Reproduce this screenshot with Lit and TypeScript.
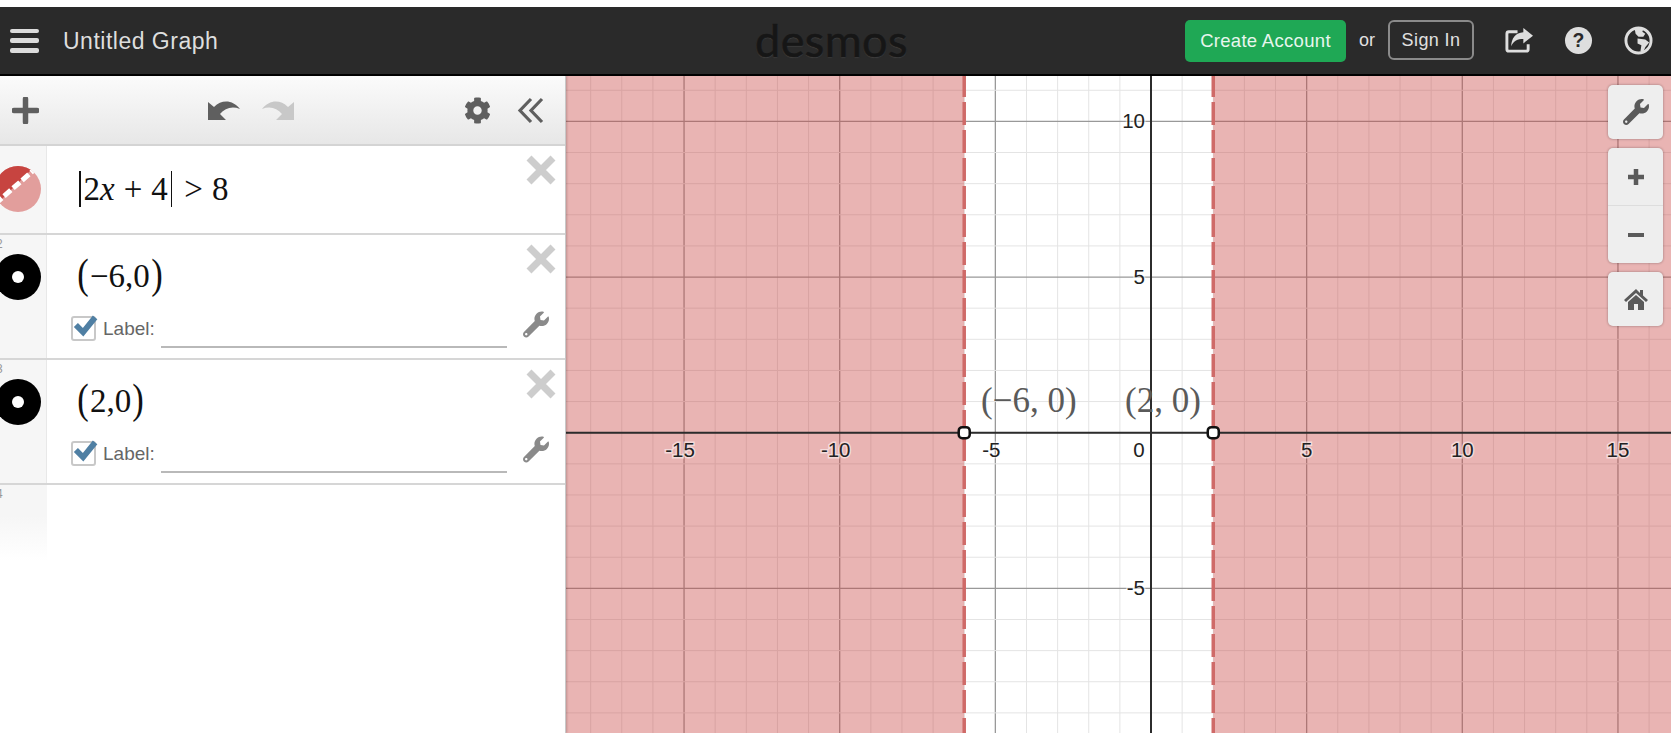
import { LitElement, html, css, svg } from "lit";
import { customElement } from "lit/decorators.js";

const GRAPH_W = 1105, GRAPH_H = 657;
const OX = 585, OY = 356.7, U = 31.13;
const X = (v: number) => OX + v * U;
const Y = (v: number) => OY - v * U;
const range = (a: number, b: number) => Array.from({ length: b - a + 1 }, (_, i) => a + i);

const WRENCH = "M507.73 109.1c-2.24-9.03-13.54-12.09-20.12-5.51l-74.36 74.36-67.88-11.31-11.31-67.88 74.36-74.36c6.62-6.62 3.43-17.9-5.66-20.16-47.38-11.74-99.55.91-136.58 37.93-39.64 39.64-50.55 97.1-34.05 147.2L18.74 402.76c-24.99 24.99-24.99 65.51 0 90.5 24.99 24.99 65.51 24.99 90.5 0l213.21-213.21c50.12 16.71 107.47 5.68 147.37-34.22 37.07-37.07 49.7-89.32 37.91-136.73zM64 472c-13.25 0-24-10.75-24-24 0-13.26 10.75-24 24-24s24 10.74 24 24c0 13.25-10.75 24-24 24z";
const GEAR = "M487.4 315.7l-42.6-24.6c4.3-23.2 4.3-47 0-70.2l42.6-24.6c4.9-2.8 7.1-8.6 5.5-14-11.1-35.6-30-67.8-54.7-94.6-3.8-4.1-10-5.1-14.8-2.3L380.8 110c-17.9-15.4-38.5-27.3-60.8-35.1V25.8c0-5.6-3.9-10.5-9.4-11.7-36.7-8.2-74.3-7.8-109.2 0-5.5 1.2-9.4 6.1-9.4 11.7V75c-22.2 7.9-42.8 19.8-60.8 35.1L88.7 85.5c-4.9-2.8-11-1.9-14.8 2.3-24.7 26.7-43.6 58.9-54.7 94.6-1.7 5.4.6 11.2 5.5 14L67.3 221c-4.3 23.2-4.3 47 0 70.2l-42.6 24.6c-4.9 2.8-7.1 8.6-5.5 14 11.1 35.6 30 67.8 54.7 94.6 3.8 4.1 10 5.1 14.8 2.3l42.6-24.6c17.9 15.4 38.5 27.3 60.8 35.1v49.2c0 5.6 3.9 10.5 9.4 11.7 36.7 8.2 74.3 7.8 109.2 0 5.5-1.2 9.4-6.1 9.4-11.7v-49.2c22.2-7.9 42.8-19.8 60.8-35.1l42.6 24.6c4.9 2.8 11 1.9 14.8-2.3 24.7-26.7 43.6-58.9 54.7-94.6 1.5-5.5-.7-11.3-5.6-14.1zM256 336c-44.1 0-80-35.9-80-80s35.9-80 80-80 80 35.9 80 80-35.9 80-80 80z";

const wrench = (cls: string) => html`<svg class=${cls} viewBox="0 0 512 512"><path fill="currentColor" d=${WRENCH}></path></svg>`;
const closeX = html`<svg class="x" viewBox="0 0 30 30"><path d="M3 3 27 27M27 3 3 27" stroke="#cdcdcd" stroke-width="7" fill="none"></path></svg>`;
const check = html`<span class="cb"><svg viewBox="0 0 26 26"><path d="M3 11 10.5 18.5 23 3" stroke="#4f7fa3" stroke-width="6" fill="none"></path></svg></span>`;
const dot = html`<svg class="ico" viewBox="0 0 46 46"><circle cx="23" cy="23" r="23" fill="#000"></circle><circle cx="23" cy="23" r="6" fill="#fff"></circle></svg>`;
const ineq = html`<svg class="ico" viewBox="0 0 46 46"><defs><clipPath id="c"><circle cx="23" cy="23" r="23"></circle></clipPath></defs><g clip-path="url(#c)"><rect width="46" height="46" fill="#e29e9c"></rect><path d="M0 0H46L0 46Z" transform="translate(-4 -2)" fill="#c74440"></path><path d="M0 38 40 3" stroke="#fff" stroke-width="5" stroke-dasharray="9 3" fill="none"></path></g></svg>`;

@customElement("app-root")
export class AppRoot extends LitElement {
  static styles = css`
    :host { display: flex; flex-direction: column; height: 733px; width: 1671px; overflow: hidden; background: #fff; font-family: "Liberation Sans", Arial, sans-serif; padding-top: 7px; box-sizing: border-box; }
    header { height: 69px; flex: none; box-sizing: border-box; background: #2a2a2a; border-bottom: 2px solid #000; display: grid; grid-template-columns: 1fr auto 1fr; align-items: center; color: #e0e0e0; }
    .hleft { display: flex; align-items: center; }
    .burger { width: 29px; height: 24px; margin-left: 10px; display: flex; flex-direction: column; justify-content: space-between; }
    .burger i { display: block; height: 4.5px; border-radius: 2px; background: #dcdcdc; }
    .title { margin: 1px 0 0 24px; font-size: 23px; letter-spacing: .5px; color: #dedede; }
    .logo { font-family: Lato, sans-serif; font-size: 45px; font-weight: 400; letter-spacing: .4px; line-height: 1; color: #161616; -webkit-text-stroke: .7px #161616; text-shadow: 0 1px 1px #444; margin: -1px 0 0 -8px; }
    .hright { display: flex; align-items: center; justify-content: flex-end; height: 100%; }
    .create { width: 161px; height: 42px; box-sizing: border-box; background: #1fa855; border-radius: 5px; display: flex; align-items: center; justify-content: center; color: #e8f6ee; font-size: 18.5px; letter-spacing: .3px; }
    .or { margin: 0 13px; font-size: 18px; }
    .signin { width: 86px; height: 40px; margin-top: -1px; box-sizing: border-box; border: 2px solid #8a8a8a; border-radius: 6px; display: flex; align-items: center; justify-content: center; font-size: 18px; letter-spacing: .4px; }
    .hicons { display: flex; align-items: center; gap: 31px; margin: -1px 18px 0 30px; }
    .hicons svg { width: 29px; height: 29px; display: block; }

    main { flex: 1; display: flex; min-height: 0; }
    .panel { width: 566px; flex: none; box-sizing: border-box; border-right: 1px solid #c8c8c8; display: flex; flex-direction: column; position: relative; z-index: 1; box-shadow: 1px 0 2px rgba(0,0,0,.2); background: #fff; }
    .tools { height: 70px; flex: none; box-sizing: border-box; border-bottom: 2px solid #d4d4d4; background: linear-gradient(#fbfbfb, #e7e7e7); display: flex; align-items: center; color: #5f5f5f; }
    .tools svg { display: block; flex: none; }
    .plus { width: 27px; height: 27px; margin-left: 12px; }
    .undo { width: 34px; height: 24px; margin: -2px 0 0 168px; }
    .redo { width: 34px; height: 24px; margin: -2px 0 0 20px; }
    .gear { width: 27px; height: 27px; margin-left: auto; }
    .chev { width: 27px; height: 27px; margin: 0 21px 0 26px; }

    .row { display: flex; flex: none; box-sizing: border-box; border-bottom: 2px solid #d6d6d6; }
    .row.r1 { height: 89px; }
    .row.r2 { height: 125px; }
    .gut { width: 47px; flex: none; box-sizing: border-box; background: #f6f6f6; border-right: 1px solid #e8e8e8; position: relative; overflow: hidden; }
    .num { position: absolute; left: -4px; top: 2px; font-size: 12px; color: #999; }
    .ico { position: absolute; left: -5px; width: 46px; height: 46px; top: 20px; }
    .r2 .ico { top: 19px; }
    .body { flex: 1; min-width: 0; display: flex; flex-direction: column; }
    .top { display: flex; align-items: flex-start; justify-content: space-between; }
    .math { display: inline-flex; align-items: center; height: 44px; margin: 21px 0 0 29px; font-family: "Liberation Serif", "Times New Roman", serif; font-size: 33px; color: #111; white-space: nowrap; }
    .r2 .math { margin-top: 19px; }
    .math i { font-style: italic; }
    .bar { display: inline-block; width: 1.5px; height: 36px; background: #111; margin: 0 3px; }
    .op { margin: 0 9px; font-weight: 400; }
    .p { font-size: 42px; font-weight: 400; line-height: 44px; transform: scaleX(.82); margin-top: -5px; display: inline-block; }
    .x { width: 30px; height: 30px; margin: 9px 9px 0 0; flex: none; }
    .opts { display: flex; align-items: flex-end; margin: 16px 0 0 24px; }
    .cb { width: 25px; height: 25px; box-sizing: border-box; border: 2px solid #c8c8c8; border-radius: 3px; position: relative; flex: none; }
    .cb svg { position: absolute; left: 0; top: -4px; width: 25px; height: 26px; }
    .lab { margin-left: 7px; font-size: 19px; color: #666; line-height: 24px; }
    .line { width: 346px; height: 2px; margin: 0 0 -7px 6px; background: #b9b9b9; }
    .wr { width: 26px; height: 27px; margin: 0 0 0 16px; color: #8a8a8a; position: relative; top: -3px; }
    .row.last { height: 76px; border: 0; }
    .row.last .gut { background: linear-gradient(#f6f6f6 40%, #fff); border-right-color: transparent; }

    .graph { flex: 1; position: relative; min-width: 0; }
    .graph > svg { display: block; }
    .side { position: absolute; right: 8px; top: 9px; display: flex; flex-direction: column; gap: 9px; }
    .sbtn { width: 55px; background: #eee; border-radius: 5px; box-shadow: 0 0 2px 1px rgba(0,0,0,.16); display: flex; flex-direction: column; color: #5a5a5a; }
    .sbtn div { height: 54px; display: flex; align-items: center; justify-content: center; }
    .sbtn.two div { height: 57px; }
    .sbtn div + div { border-top: 1px solid #ddd; }
    .sbtn svg { width: 26px; height: 26px; display: block; }
    .axis { font: 20.5px "Liberation Sans", Arial, sans-serif; fill: #222; paint-order: stroke; stroke: rgba(255,255,255,.55); stroke-width: 3px; }
    .plabel { font: 35px "Liberation Serif", "Times New Roman", serif; fill: #5a5a5a; }
  `;

  private graph() {
    const xs = range(-19, 17), ys = range(-10, 12);
    const xl = [-15, -10, -5, 5, 10, 15];
    return html`<svg width=${GRAPH_W} height=${GRAPH_H} viewBox="0 0 ${GRAPH_W} ${GRAPH_H}">
      <rect width=${GRAPH_W} height=${GRAPH_H} fill="#fff"></rect>
      ${xs.map((v) => svg`<line x1=${X(v)} x2=${X(v)} y1="0" y2=${GRAPH_H} stroke=${v % 5 ? "#e4e4e4" : "#999"} stroke-width=${v % 5 ? 1 : 1.3}></line>`)}
      ${ys.map((v) => svg`<line y1=${Y(v)} y2=${Y(v)} x1="0" x2=${GRAPH_W} stroke=${v % 5 ? "#e4e4e4" : "#999"} stroke-width=${v % 5 ? 1 : 1.3}></line>`)}
      <rect x="0" y="0" width=${X(-6)} height=${GRAPH_H} fill="#c74440" fill-opacity=".4"></rect>
      <rect x=${X(2)} y="0" width=${GRAPH_W - X(2)} height=${GRAPH_H} fill="#c74440" fill-opacity=".4"></rect>
      <line x1=${OX} x2=${OX} y1="0" y2=${GRAPH_H} stroke="#2c2c2c" stroke-width="2"></line>
      <line y1=${OY} y2=${OY} x1="0" x2=${GRAPH_W} stroke="#2c2c2c" stroke-width="2"></line>
      ${[-6, 2].map((v) => svg`<line x1=${X(v)} x2=${X(v)} y1="-2" y2=${GRAPH_H} stroke="#cf6a68" stroke-width="3.5" stroke-dasharray="23 5"></line>`)}
      ${[-6, 2].map((v) => svg`<rect x=${X(v) - 5.5} y=${OY - 5.5} width="11" height="11" rx="3.5" fill="#fff" stroke="#111" stroke-width="2.5"></rect>`)}
      ${xl.map((v) => svg`<text class="axis" x=${X(v) - (v < 0 ? 4 : 0)} y=${OY + 24} text-anchor="middle">${v < 0 ? "-" + -v : v}</text>`)}
      <text class="axis" x=${OX - 12} y=${OY + 24} text-anchor="middle">0</text>
      ${[10, 5, -5].map((v) => svg`<text class="axis" x=${OX - 6} y=${Y(v) + 7} text-anchor="end">${v < 0 ? "-" + -v : v}</text>`)}
      <text class="plabel" x="415" y="336">(−6, 0)</text>
      <text class="plabel" x="559" y="336">(2, 0)</text>
    </svg>`;
  }

  render() {
    return html`
      <header>
        <div class="hleft"><div class="burger"><i></i><i></i><i></i></div><span class="title">Untitled Graph</span></div>
        <div class="logo">desmos</div>
        <div class="hright">
          <div class="create">Create Account</div>
          <span class="or">or</span>
          <div class="signin">Sign In</div>
          <div class="hicons">
            <svg viewBox="0 0 30 30"><path d="M14 6H5Q3 6 3 8V24Q3 26 5 26H23Q25 26 25 24V19" fill="none" stroke="#dedede" stroke-width="3"></path><path d="M20 2 30 10 20 18V13.5C14 13.5 10 15 7.5 21 7.500 13 12 7 20 6.500Z" fill="#dedede"></path></svg>
            <svg viewBox="0 0 30 30"><circle cx="15" cy="15" r="14" fill="#dedede"></circle><text x="15" y="22" text-anchor="middle" font-family="Liberation Sans" font-weight="700" font-size="20" fill="#2a2a2a">?</text></svg>
            <svg viewBox="0 0 30 30"><circle cx="15" cy="15" r="13" fill="none" stroke="#dedede" stroke-width="3"></circle><path d="M11 2.500 20 3 19 6 22 8 20 11 15 11 12 8ZM14 13 22 14 26 17 22 22 20 27 17 26 18 20 14 18Z" fill="#dedede"></path></svg>
          </div>
        </div>
      </header>
      <main>
        <aside class="panel">
          <div class="tools">
            <svg class="plus" viewBox="0 0 27 27"><path d="M13.500 2V25M2 13.500H25" stroke="currentColor" stroke-width="5.500" stroke-linecap="round" fill="none"></path></svg>
            <svg class="undo" viewBox="0 0 34 24"><path d="M1 5V23H19L13 17C18 11 25 9 33 12 26 3 15 2 7 10Z" fill="currentColor"></path></svg>
            <svg class="redo" viewBox="0 0 34 24"><path d="M33 5V23H15L21 17C16 11 9 9 1 12 8 3 19 2 27 10Z" fill="#c8c8c8"></path></svg>
            <svg class="gear" viewBox="0 0 512 512"><path fill="currentColor" d=${GEAR}></path></svg>
            <svg class="chev" viewBox="0 0 27 27"><path d="M14 2 3 13.500 14 25M25 2 14 13.500 25 25" stroke="currentColor" stroke-width="3.200" fill="none"></path></svg>
          </div>
          <div class="row r1">
            <div class="gut">${ineq}</div>
            <div class="body"><div class="top">
              <div class="math"><span class="bar"></span>2<i>x</i><span class="op">+</span>4<span class="bar"></span><span class="op">&gt;</span>8</div>
              ${closeX}
            </div></div>
          </div>
          ${[["2", "−6,0"], ["3", "2,0"]].map(([n, t]) => html`
            <div class="row r2">
              <div class="gut"><span class="num">${n}</span>${dot}</div>
              <div class="body">
                <div class="top">
                  <div class="math"><span class="p">(</span>${t}<span class="p">)</span></div>
                  ${closeX}
                </div>
                <div class="opts">${check}<span class="lab">Label:</span><span class="line"></span>${wrench("wr")}</div>
              </div>
            </div>`)}
          <div class="row last"><div class="gut"><span class="num">4</span></div><div class="body"></div></div>
        </aside>
        <section class="graph">
          ${this.graph()}
          <div class="side">
            <div class="sbtn"><div>${wrench("")}</div></div>
            <div class="sbtn two">
              <div><svg viewBox="0 0 26 26"><path d="M13 5V21M5 13H21" stroke="currentColor" stroke-width="4.500" fill="none"></path></svg></div>
              <div><svg viewBox="0 0 26 26"><path d="M5 13H21" stroke="currentColor" stroke-width="4" fill="none"></path></svg></div>
            </div>
            <div class="sbtn"><div><svg viewBox="0 0 26 26"><path d="M13 3 1 14 3 16 13 7 23 16 25 14 20 9.500V4H17V7Z M5 16 13 9 21 16V24H15V18H11V24H5Z" fill="currentColor"></path></svg></div></div>
          </div>
        </section>
      </main>
    `;
  }
}
